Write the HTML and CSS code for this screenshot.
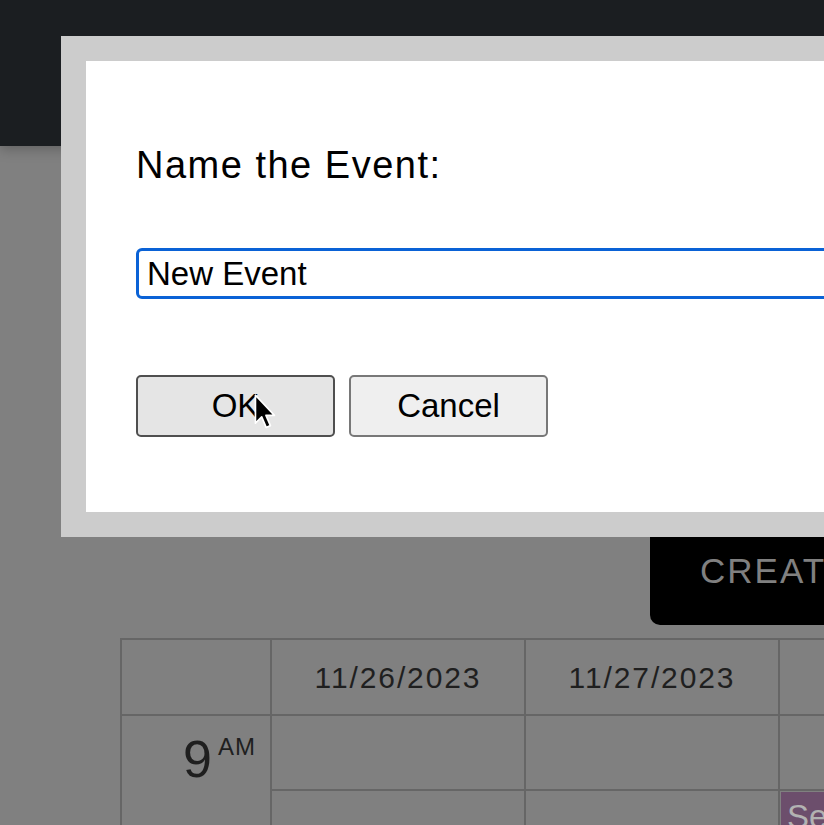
FILE: index.html
```html
<!DOCTYPE html>
<html lang="en">
<head>
<meta charset="utf-8">
<title>Schedule</title>
<link rel="stylesheet" href="styles.css">
</head>
<body>
  <header class="navbar"></header>
  <main class="content">
    <div class="toolbar">
      <button class="create-btn">CREATE EVENT</button>
    </div>
    <table class="schedule">
      <colgroup>
        <col class="col-time">
        <col class="col-day">
        <col class="col-day">
        <col class="col-day">
      </colgroup>
      <thead>
        <tr>
          <th></th>
          <th>11/26/2023</th>
          <th>11/27/2023</th>
          <th>11/28/2023</th>
        </tr>
      </thead>
      <tbody>
        <tr>
          <td class="time" rowspan="2"><span class="hour">9</span><span class="ampm">AM</span></td>
          <td></td>
          <td></td>
          <td></td>
        </tr>
        <tr>
          <td></td>
          <td></td>
          <td class="slot"><div class="event">Session</div></td>
        </tr>
      </tbody>
    </table>
  </main>

  <div class="prompt">
    <div class="prompt-body">
      <p class="prompt-label">Name the Event:</p>
      <input class="prompt-input" type="text" value="New Event">
      <div class="prompt-actions">
        <button class="btn btn-ok">OK</button>
        <button class="btn btn-cancel">Cancel</button>
      </div>
    </div>
  </div>

  <svg class="cursor" width="25" height="38" viewBox="0 0 22 34" aria-hidden="true">
    <path d="M2 2 L2 27 L7.6 21.4 L11.6 30.8 L15.4 29.2 L11.4 20 L19 20 Z" fill="#000" stroke="#fff" stroke-width="1.5" stroke-linejoin="round"/>
  </svg>
</body>
</html>
```
FILE: styles.css
```css
html, body {
  margin: 0;
  padding: 0;
}
body {
  width: 824px;
  height: 825px;
  overflow: hidden;
  background: #808080;
  font-family: "Liberation Sans", Arial, sans-serif;
  position: relative;
}
.navbar {
  height: 146px;
  background: #1b1e21;
  box-shadow: 0 3px 12px rgba(0, 0, 0, 0.25);
  position: relative;
}
.content {
  padding-left: 120px;
  width: 1400px;
}
.toolbar {
  display: flex;
  margin-top: 379px;
}
.create-btn {
  margin-left: 530px;
  background: #000;
  color: #808080;
  border: none;
  border-radius: 10px;
  font-family: "Liberation Sans", Arial, sans-serif;
  font-size: 35px;
  letter-spacing: 2px;
  line-height: 39px;
  padding: 26px 50px 35px 50px;
  white-space: nowrap;
}
.schedule {
  margin-top: 13px;
  border-collapse: collapse;
  table-layout: fixed;
  width: 911px;
}
.col-time { width: 150px; }
.col-day { width: 254px; }
.schedule th,
.schedule td {
  border: 2px solid #666;
  padding: 0;
}
.schedule th {
  height: 72px;
  font-weight: normal;
  font-size: 30px;
  letter-spacing: 1.9px;
  color: #1f1f1f;
  text-align: center;
  padding-top: 2px;
}
.schedule td {
  height: 73px;
}
.schedule td.time {
  vertical-align: top;
  text-align: right;
  padding: 14px 14px 0 0;
  color: #1f1f1f;
}
.hour {
  font-size: 52px;
  line-height: 58px;
  letter-spacing: 2px;
}
.ampm {
  font-size: 24px;
  letter-spacing: 1px;
  vertical-align: top;
  line-height: 34px;
  margin-left: 4px;
}
.slot {
  vertical-align: top;
}
.event {
  margin: 1px 0 0 1px;
  height: 80px;
  background: #6c4e6c;
  color: #b2b2b2;
  font-size: 33px;
  padding: 6px 6px 0 6px;
  box-sizing: border-box;
}

.prompt {
  position: fixed;
  left: 61px;
  top: 36px;
  width: 1000px;
  height: 451px;
  border: 25px solid #cccccc;
  background: #fff;
}
.prompt-body {
  padding: 81px 0 0 50px;
}
.prompt-label {
  margin: 0;
  font-size: 38px;
  line-height: 46px;
  letter-spacing: 1.5px;
  color: #000;
}
.prompt-input {
  display: block;
  margin-top: 60px;
  box-sizing: border-box;
  width: 900px;
  height: 51px;
  border: 3px solid #0a62d6;
  border-radius: 6px;
  padding: 0 8px;
  font-family: "Liberation Sans", Arial, sans-serif;
  font-size: 33px;
  color: #000;
  outline: none;
}
.prompt-actions {
  display: flex;
  gap: 14px;
  margin-top: 76px;
}
.btn {
  box-sizing: border-box;
  width: 199px;
  height: 62px;
  border-radius: 5px;
  font-family: "Liberation Sans", Arial, sans-serif;
  font-size: 33px;
  color: #000;
  padding: 0;
}
.btn-ok {
  background: #e5e5e5;
  border: 2px solid #4f4f4f;
}
.btn-cancel {
  background: #efefef;
  border: 2px solid #787878;
}
.cursor {
  position: absolute;
  left: 253px;
  top: 393px;
}
```
